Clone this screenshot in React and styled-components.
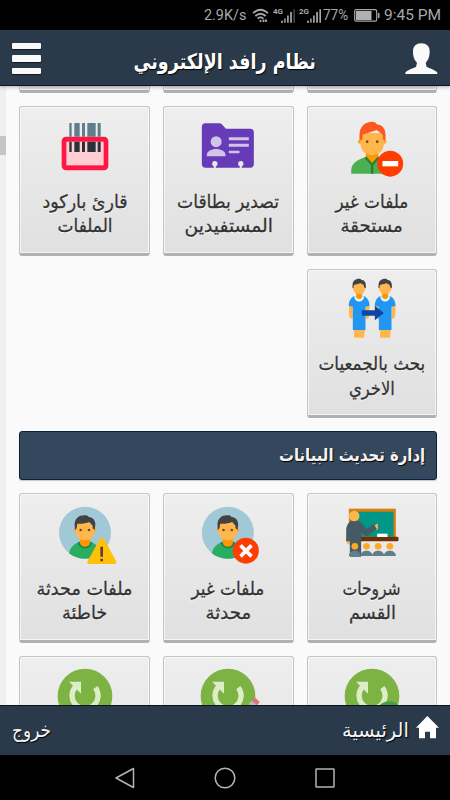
import React, {useLayoutEffect, useRef, useState} from 'react'
import styled, {createGlobalStyle} from 'styled-components'


let GlobalStyle = createGlobalStyle`
  * { box-sizing: border-box; }
  body {
    margin: 0;
    background: #000;
    font-family: 'DejaVu Sans', sans-serif;
  }
`


// Squeezes or stretches one line of text so that it fills the given width
let FitText = ({width, origin = 'center', children}) => {
  let ref = useRef(null)
  let [scale, setScale] = useState(1)
  useLayoutEffect(() => {
    setScale(width / ref.current.offsetWidth)
  }, [width, children])
  return (
    <Line ref={ref} style={{transform: `scaleX(${scale})`, transformOrigin: origin}}>
      {children}
    </Line>
  )
}

let Line = styled.span`
  display: block;
  flex: none;
  white-space: nowrap;
`



let Icon = ({box, children}) => <IconSvg viewBox={box}>{children}</IconSvg>

let IconSvg = styled.svg`
  display: block;
  flex: none;
  width: 60px;
  height: 60px;
  overflow: visible;
`

let BarcodeIcon = () => (
  <Icon box='134 115 180 180'>
    <rect x='154' y='171' width='140' height='101' rx='13' fill='#ff1744'/>
    <rect x='168' y='186' width='112' height='71' fill='#ffcdd2'/>
    <path fill='#607d8b' d='M177 130h7v41h-7zM192 130h16v41h-16zM215 130h9v41h-9zM231 130h25v41h-25zM262 130h9v41h-9z'/>
    <path fill='#263238' d='M177 186h7v31h-7zM192 186h16v31h-16zM215 186h9v31h-9zM231 186h25v31h-25zM262 186h9v31h-9z'/>
  </Icon>
)

let CardsIcon = () => (
  <Icon box='130.5 115 180 180'>
    <path fill='#673ab7' d='M153 131h42q4 0 7 3l12 13h73q11 0 11 11v95q0 11-11 11H153q-11 0-11-11V142q0-11 11-11z'/>
    <g fill='#e8e8e8'>
      <circle cx='181' cy='252' r='8'/>
      <rect x='178' y='252' width='6' height='13'/>
      <circle cx='259' cy='252' r='8'/>
      <rect x='256' y='252' width='6' height='13'/>
    </g>
    <g fill='#d1c4e9'>
      <circle cx='185' cy='186' r='16.5'/>
      <path d='M157 230v-5c0-10 14-17 28-17s28 7 28 17v5z'/>
      <path d='M223 173h60v9h-60zM223 192h60v9h-60zM223 213h32v8h-32z'/>
    </g>
  </Icon>
)

let DeniedPersonIcon = () => (
  <Icon box='125.5 115 180 180'>
    <path fill='#4caf50' d='M153 282v-9c0-22 19-33 44-41h38c25 8 44 19 44 41v9z'/>
    <path fill='#ff9800' d='M197 212h38v22l-19 20-19-20z'/>
    <path fill='none' stroke='#2e7d32' strokeWidth='7' d='M196 233l20 22 20-22M216 255v27'/>
    <circle cx='179' cy='186' r='6' fill='#ffa726'/>
    <circle cx='253' cy='186' r='6' fill='#ffa726'/>
    <path fill='#ffb74d' d='M181 160h70v32c0 22-17 34-35 34s-35-12-35-34z'/>
    <path fill='#ff5722' d='M178 183v-17c0-25 16-40 38-40 7 0 11 2 14 8 17 2 26 14 26 32v17l-8-4v-13l-18-15-43 14v14z'/>
    <circle cx='201' cy='186' r='4' fill='#784719'/>
    <circle cx='231' cy='186' r='4' fill='#784719'/>
    <circle cx='270' cy='252' r='39' fill='#ff3d00'/>
    <rect x='247' y='244' width='47' height='16' fill='#fff'/>
  </Icon>
)

let Figure = ({x = 0}) => (
  <g transform={`translate(${x} 0)`}>
    <path fill='#ffb74d' d='M146 132h12v43c-6 0-11-4-11-11zM196 132h12l-1 34c0 6-4 9-10 9zM161 206h33l-2 25h-30z'/>
    <path fill='#2196f3' d='M164 106h26c11 4 18 14 18 29l-12 3v70h-38v-70l-12-3c0-15 7-25 18-29z'/>
    <path fill='#e1f5fe' d='M162 107h30c-1 21-29 21-30 0z'/>
    <path fill='#ff9800' d='M168 94h18v14c-2 10-16 10-18 0z'/>
    <circle cx='177' cy='81' r='19' fill='#ffb74d'/>
    <path fill='#424242' d='M157 83V73c0-12 8-19 20-19 4 0 6 1 7 4 8 0 13 6 13 15v10l-5-3-2-8-9-4-20 5-1 8z'/>
  </g>
)

let TransferIcon = () => (
  <Icon box='125.5 61 180 180'>
    <Figure/>
    <Figure x={78}/>
    <path fill='#0d47a1' d='M185 149h39v-14l27 22-27 22v-14h-39z'/>
  </Icon>
)

// Round portrait shared by the "updated files" tiles
let Portrait = ({x = 0}) => (
  <g transform={`translate(${x} 0)`}>
    <circle cx='224' cy='144' r='78' fill='#a1c8d7'/>
    <path fill='#27ae60' d='M176 206c4-19 15-29 33-35h30c18 6 29 16 33 35-27 22-69 22-96 0z'/>
    <path fill='#1e8449' d='M203 173l6-2h30l6 2c-2 24-40 24-42 0z'/>
    <path fill='#ff9800' d='M209 157h30v17c-2 16-28 16-30 0z'/>
    <circle cx='195' cy='136' r='5' fill='#ffa726'/>
    <circle cx='253' cy='136' r='5' fill='#ffa726'/>
    <path fill='#ffb74d' d='M196 114h56v26c0 17-13 27-28 27s-28-10-28-27z'/>
    <path fill='#424242' d='M194 136l-1-16c0-18 12-28 29-28 7 0 10 1 13 5 13 1 20 10 20 23l-2 16-6-5v-8l-10-11c-9 4-25 6-36 5l-2 14z'/>
    <circle cx='211' cy='136' r='4' fill='#784719'/>
    <circle cx='236' cy='136' r='4' fill='#784719'/>
  </g>
)

let WrongIcon = () => (
  <Icon box='134 61 180 180'>
    <Portrait/>
    <path fill='#ffc107' d='M268 164q7-9 14 0l35 65q3 9-5 9h-75q-9 0-5-9z'/>
    <path fill='#5d4037' d='M270 186h8v30h-8zM270 222h8v8h-8z'/>
  </Icon>
)

let OutdatedIcon = () => (
  <Icon box='130.5 61 180 180'>
    <Portrait x={-4}/>
    <circle cx='274' cy='198' r='39' fill='#ff3d00'/>
    <path stroke='#fff' strokeWidth='11' d='M258 182l33 33M291 182l-33 33'/>
  </Icon>
)

let LessonIcon = () => (
  <Icon box='125.5 61 180 180'>
    <rect x='146' y='72' width='141' height='85' fill='#db7f09'/>
    <rect x='151' y='81' width='129' height='75' fill='#009688'/>
    <rect x='166' y='156' width='129' height='14' rx='3' fill='#6d3008'/>
    <rect x='231' y='147' width='31' height='10' fill='#fff'/>
    <path fill='#ffb74d' d='M138 166h12v14c-6 0-11-3-12-8zM220 126l9-8q4-3 4 2v14l-7 2z'/>
    <path fill='#455a64' d='M138 170v-31c0-19 10-32 25-32 12 0 20 5 27 17l10 9 20-14 10 13-25 20c-4 3-8 2-12-1l-10-8v73h-34v-46z'/>
    <circle cx='162' cy='94' r='16' fill='#ffb74d'/>
    {[164, 199, 234, 269].map(x => (
      <g key={x}>
        <circle cx={x} cy='185' r='10' fill='#ffa726'/>
        <path fill='#607d8b' d={`M${x - 18} 214c0-10 8-16 18-16s18 6 18 16z`}/>
      </g>
    ))}
  </Icon>
)

let RefreshIcon = ({children}) => (
  <Icon box='164 82 180 180'>
    <circle cx='254' cy='166' r='82' fill='#7cb342'/>
    <path fill='none' stroke='#dcedc8' strokeWidth='16' d='M226 138A39 39 0 1 0 285 141'/>
    <path fill='#dcedc8' d='M206 123h36v36z'/>
    {children}
  </Icon>
)

let RefreshEditIcon = () => (
  <RefreshIcon>
    <g transform='rotate(45 334 186)'>
      <rect x='324' y='174' width='20' height='14' rx='3' fill='#e57373'/>
      <rect x='324' y='188' width='20' height='13' fill='#b0bec5'/>
      <rect x='324' y='201' width='20' height='40' fill='#ff9800'/>
    </g>
  </RefreshIcon>
)

let RefreshAddIcon = () => (
  <RefreshIcon>
    <circle cx='305' cy='221' r='39' fill='#43a047'/>
  </RefreshIcon>
)



let WifiIcon = () => (
  <svg width='17' height='15' viewBox='0 0 17 15' fill='none' stroke='#a8a8a8' strokeWidth='1.8'>
    <path d='M1 5.2q7.500-7 15 0M3.300 8q5.200-4.600 10.400 0M5.600 10.600q2.900-2.400 5.800 0'/>
    <path d='M8.500 14v-2M11.500 14v-2.500M14 14v-2.500'/>
  </svg>
)

let Signal = ({label, weak}) => (
  <SignalBox>
    <SignalName><FitText width={8} origin='left'>{label}</FitText></SignalName>
    <svg width='15' height='15' viewBox='0 0 15 15' fill='#a8a8a8'>
      <path d='M0 13h2v2H0zM3.300 10.500h1.500V15H3.300zM6.300 7.500h1.700V15H6.300zM9.500 4h1.800v11H9.500z'/>
      <path fill={weak ? '#444' : '#a8a8a8'} d='M12.800 1h1.700v14h-1.700z'/>
    </svg>
  </SignalBox>
)

let SignalBox = styled.div`
  display: flex;
  align-items: flex-start;
  width: 22px;
  margin-left: 4px;
`

let SignalName = styled.div`
  width: 7.500px;
  font: bold 8px/8px Roboto, sans-serif;
`

let StatusBar = styled.div`
  display: flex;
  flex: none;
  align-items: center;
  justify-content: flex-end;
  height: 30px;
  padding-right: 11px;
  background: #000;
  color: #a8a8a8;
  font: 15.5px/30px Roboto, sans-serif;
`

let StatusText = styled.div`
  width: ${p => p.$width}px;
  margin-left: ${p => p.$gap || 0}px;
`

let BatteryIcon = () => (
  <svg width='26' height='13' viewBox='0 0 26 13'>
    <rect x='0.700' y='0.700' width='22' height='11.500' rx='1.500' fill='none' stroke='#a8a8a8' strokeWidth='1.200'/>
    <rect x='2' y='2' width='15.500' height='9' fill='#b0b0b0'/>
    <path fill='#a8a8a8' d='M24 4h1.500v5H24z'/>
  </svg>
)



let Screen = styled.div`
  display: flex;
  flex-direction: column;
  width: 450px;
  height: 800px;
  overflow: hidden;
  background: #fafafa;
`

let Header = styled.header`
  display: flex;
  flex: none;
  align-items: center;
  justify-content: space-between;
  height: 56px;
  padding: 0 12px;
  background: #2a3a4b;
  border-bottom: 1px solid #0b1530;
  box-shadow: 0 1px 4px rgba(0, 0, 0, .3);
  z-index: 1;
`

let Title = styled.h1`
  margin: 0;
  padding-top: 8px;
  color: #fff;
  font-size: 21.500px;
  font-weight: bold;
  line-height: 30px;
  text-shadow: 1px 1px 1px #000;
`

let MenuButton = styled.div`
  display: flex;
  flex-direction: column;
  gap: 6px;
  width: 32px;
  padding-top: 2px;
`

let MenuBar = styled.div`
  width: 29px;
  height: 6.500px;
  border-radius: 1px;
  background: #f9f9f9;
  box-shadow: 0 1px 1px #10182c;
`

let UserIcon = () => (
  <svg width='33' height='32' viewBox='0 0 99 96'>
    <path fill='#fafafa' d='M1 96v-4c5-8 21-12 32-17l3-13c-10-9-12-22-12-34C24 12 34 4 49 4s25 8 25 24c0 12-2 25-12 34l3 13c11 5 27 9 32 17v4z'/>
  </svg>
)

let Body = styled.div`
  display: flex;
  flex: 1;
  min-height: 0;
  overflow: hidden;
`

let Rail = styled.div`
  flex: none;
  width: 6px;
  padding-top: 50px;
  background: #f0f0f0;
`

let Thumb = styled.div`
  height: 19px;
  background: #c6c6c6;
`

let Content = styled.main`
  flex: 1;
  direction: rtl;
  padding: 0 12.700px 0 13.300px;
`

let Grid = styled.div`
  display: grid;
  grid-template-columns: repeat(3, 1fr);
  grid-auto-rows: 149.500px;
  gap: 13px;
  margin-top: ${p => p.$scrolled ? '-142.400px' : '13px'};
`

let Card = styled.div`
  display: flex;
  flex-direction: column;
  align-items: center;
  padding-top: 11px;
  border: 1px solid #c4c4c4;
  border-bottom: 3px solid #b1b1b1;
  border-radius: 3px;
  background: linear-gradient(#eee, #e0e0e0);
  box-shadow: inset 0 0 0 1px rgba(255, 255, 255, .65);
`

let Label = styled.div`
  display: flex;
  flex-direction: column;
  align-items: center;
  margin-top: 11.500px;
  color: #333;
  font-size: 18.500px;
  line-height: 24.500px;
  text-shadow: 0 1px 0 #fff;
  -webkit-text-stroke: .3px #333;
`

let SectionTitle = styled.h2`
  display: flex;
  align-items: center;
  height: 49.500px;
  margin: 12.800px 0 0;
  padding: 0 11px 2px;
  border: 1px solid #0a2240;
  border-radius: 3px;
  background: #34475c;
  box-shadow: 0 1px 1px rgba(0, 0, 0, .2);
  color: #f4f4f4;
  font-size: 17.500px;
  font-weight: bold;
  text-shadow: 1px 1px 1px #000;
`

let Tile = ({icon: TileIcon, lines = []}) => (
  <Card>
    <TileIcon/>
    <Label>
      {lines.map(([text, width]) => <FitText key={text} width={width}>{text}</FitText>)}
    </Label>
  </Card>
)


let Footer = styled.footer`
  display: flex;
  flex: none;
  direction: rtl;
  align-items: center;
  justify-content: space-between;
  height: 50px;
  padding: 0 11px 1px 12px;
  border-top: 1px solid #0b1220;
  background: #2a3a4b;
  color: #f4f4f4;
  font-size: 20px;
  text-shadow: 1px 1px 1px #000;
`

let FooterLink = styled.div`
  display: flex;
  align-items: center;
  gap: 7px;
`

let FooterText = styled.div`
  display: flex;
  width: ${p => p.$width}px;
`

let HomeIcon = () => (
  <HomeSvg width='23' height='23' viewBox='0 0 69 69'>
    <path fill='#fff' d='M34 0L0 35h9v32h18V47h15v20h18V35h9z'/>
  </HomeSvg>
)

let HomeSvg = styled.svg`
  margin-bottom: 5px;
`

let NavBar = styled.nav`
  display: flex;
  flex: none;
  align-items: center;
  justify-content: center;
  gap: 78px;
  height: 45px;
  background: #000;
`

let NavIcon = ({children}) => (
  <svg width='22' height='22' viewBox='0 0 22 22' fill='none' stroke='#b4b4b4' strokeWidth='1.500' strokeLinejoin='round'>
    {children}
  </svg>
)


let files = [
  {icon: DeniedPersonIcon, lines: [['ملفات غير', 73], ['مستحقة', 62]]},
  {icon: CardsIcon, lines: [['تصدير بطاقات', 102], ['المستفيدين', 88]]},
  {icon: BarcodeIcon, lines: [['قارئ باركود', 85], ['الملفات', 55]]},
  {icon: TransferIcon, lines: [['بحث بالجمعيات', 107], ['الاخري', 46]]},
]

let updates = [
  {icon: LessonIcon, lines: [['شروحات', 58], ['القسم', 47]]},
  {icon: OutdatedIcon, lines: [['ملفات غير', 73], ['محدثة', 46]]},
  {icon: WrongIcon, lines: [['ملفات محدثة', 96], ['خاطئة', 45]]},
  {icon: RefreshAddIcon},
  {icon: RefreshEditIcon},
  {icon: RefreshIcon},
]


export default () => (
  <Screen>
    <GlobalStyle/>
    <StatusBar>
      <StatusText $width={48}><FitText width={44.5} origin='left'>2.9K/s</FitText></StatusText>
      <WifiIcon/>
      <Signal label='4G' weak/>
      <Signal label='2G'/>
      <StatusText $width={31} $gap={2}><FitText width={27} origin='left'>77%</FitText></StatusText>
      <BatteryIcon/>
      <StatusText $width={55} $gap={4}><FitText width={55} origin='left'>9:45 PM</FitText></StatusText>
    </StatusBar>

    <Header>
      <MenuButton>
        <MenuBar/>
        <MenuBar/>
        <MenuBar/>
      </MenuButton>
      <Title><FitText width={182}>نظام رافد الإلكتروني</FitText></Title>
      <UserIcon/>
    </Header>

    <Body>
      <Rail><Thumb/></Rail>
      <Content>
        <Grid $scrolled>
          <Card/>
          <Card/>
          <Card/>
          {files.map((f, i) => <Tile key={i} {...f}/>)}
        </Grid>
        <SectionTitle><FitText width={146} origin='right'>إدارة تحديث البيانات</FitText></SectionTitle>
        <Grid>
          {updates.map((u, i) => <Tile key={i} {...u}/>)}
        </Grid>
      </Content>
    </Body>

    <Footer>
      <FooterLink>
        <HomeIcon/>
        <FooterText $width={67}><FitText width={67} origin='right'>الرئيسية</FitText></FooterText>
      </FooterLink>
      <FooterText $width={39}><FitText width={39} origin='right'>خروج</FitText></FooterText>
    </Footer>

    <NavBar>
      <NavIcon><path d='M19.500 1.500v19L2 11z'/></NavIcon>
      <NavIcon><circle cx='11' cy='11' r='9.800'/></NavIcon>
      <NavIcon><rect x='2' y='2' width='18' height='18' rx='.5'/></NavIcon>
    </NavBar>
  </Screen>
)
